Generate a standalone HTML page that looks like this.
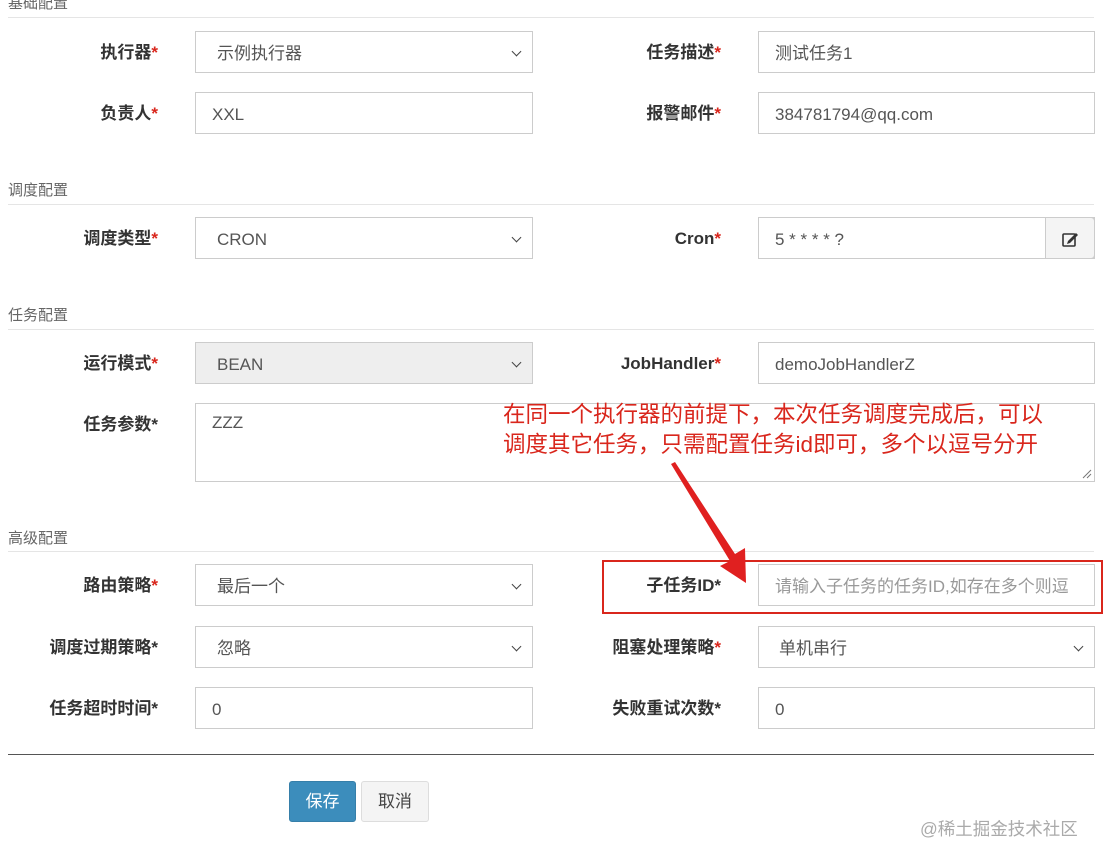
<!DOCTYPE html>
<html><head><meta charset="utf-8"><style>
*{box-sizing:border-box;margin:0;padding:0}
body{width:1103px;height:861px;background:#fff;position:relative;overflow:hidden;font-family:"Liberation Sans","Noto Sans CJK SC",sans-serif;color:#555}
.a{position:absolute}
.sec{position:absolute;left:8px;font-size:15px;color:#666;line-height:18px}
.hr{position:absolute;left:8px;width:1086px;height:1px;background:#e5e5e5}
.lab{position:absolute;font-size:17px;font-weight:bold;color:#333;text-align:right;line-height:20px}
.lab i{font-style:normal;color:#d9261c}
.box{position:absolute;height:42px;border:1px solid #ccc;background:#fff;font-size:17px;color:#555;line-height:43px;padding-left:16px}
.l{left:195px;width:338px}
.r{left:758px;width:337px}
.sel:after{content:"";position:absolute;right:12px;top:16px;width:6px;height:6px;border-right:1.5px solid #444;border-bottom:1.5px solid #444;transform:rotate(45deg)}
.sel{padding-left:21px}
.r.sel{padding-left:20px}
</style></head><body>
<div class="sec" style="top:-5px">基础配置</div><div class="hr" style="top:17px"></div>
<div class="lab" style="right:945px;top:43px">执行器<i>*</i></div>
<div class="box l sel" style="top:31px">示例执行器</div>
<div class="lab" style="right:382px;top:43px">任务描述<i>*</i></div>
<div class="box r" style="top:31px">测试任务1</div>
<div class="lab" style="right:945px;top:104px">负责人<i>*</i></div>
<div class="box l" style="top:92px">XXL</div>
<div class="lab" style="right:382px;top:104px">报警邮件<i>*</i></div>
<div class="box r" style="top:92px">384781794@qq.com</div>

<div class="sec" style="top:182px">调度配置</div><div class="hr" style="top:204px"></div>
<div class="lab" style="right:945px;top:229px">调度类型<i>*</i></div>
<div class="box l sel" style="top:217px">CRON</div>
<div class="lab" style="right:382px;top:229px">Cron<i>*</i></div>
<div class="box r" style="top:217px">5 * * * * ?</div>
<div class="a" style="left:1045px;top:217px;width:50px;height:42px;background:#f4f4f4;border:1px solid #ccc;border-radius:0 4px 4px 0">
<svg width="50" height="42" viewBox="0 0 50 42"><rect x="17" y="16" width="12" height="12" fill="none" stroke="#333" stroke-width="1.6" rx="1"/><path d="M22 23 L30 15 L32 17 L24 25 L21 26 Z" fill="#333"/></svg></div>

<div class="sec" style="top:307px">任务配置</div><div class="hr" style="top:329px"></div>
<div class="lab" style="right:945px;top:354px">运行模式<i>*</i></div>
<div class="box l sel" style="top:342px;background:#eee">BEAN</div>
<div class="lab" style="right:382px;top:354px">JobHandler<i>*</i></div>
<div class="box r" style="top:342px">demoJobHandlerZ</div>
<div class="lab" style="right:945px;top:415px">任务参数*</div>
<div class="box" style="left:195px;top:403px;width:900px;height:79px;line-height:38px">ZZZ
<svg class="a" style="right:2px;bottom:2px" width="10" height="10"><path d="M1 9L9 1M5 9L9 5" stroke="#777" stroke-width="1"/></svg></div>
<div class="a" style="left:503px;top:400px;font-size:22.5px;line-height:30px;color:#d9261c">在同一个执行器的前提下，本次任务调度完成后，可以<br>调度其它任务，只需配置任务id即可，多个以逗号分开</div>

<div class="sec" style="top:530px">高级配置</div><div class="hr" style="top:551px"></div>
<div class="lab" style="right:945px;top:576px">路由策略<i>*</i></div>
<div class="box l sel" style="top:564px">最后一个</div>
<div class="lab" style="right:382px;top:576px">子任务ID*</div>
<div class="box r" style="top:564px;color:#999">请输入子任务的任务ID,如存在多个则逗</div>
<div class="a" style="left:602px;top:560px;width:501px;height:54px;border:2px solid #d9261c"></div>
<div class="lab" style="right:945px;top:638px">调度过期策略*</div>
<div class="box l sel" style="top:626px">忽略</div>
<div class="lab" style="right:382px;top:638px">阻塞处理策略<i>*</i></div>
<div class="box r sel" style="top:626px">单机串行</div>
<div class="lab" style="right:945px;top:699px">任务超时时间*</div>
<div class="box l" style="top:687px">0</div>
<div class="lab" style="right:382px;top:699px">失败重试次数*</div>
<div class="box r" style="top:687px">0</div>

<svg class="a" style="left:0;top:0" width="1103" height="861"><path d="M671 464 L675 462 L735 554 L745 548 L746 583 L720 566 L730 561 Z" fill="#e02020"/></svg>

<div class="a" style="left:8px;top:754px;width:1086px;height:1px;background:#555"></div>
<div class="a" style="left:289px;top:781px;width:67px;height:41px;background:#3c8dbc;border:1px solid #367fa9;border-radius:3px;color:#fff;font-size:17px;line-height:40px;text-align:center">保存</div>
<div class="a" style="left:361px;top:781px;width:68px;height:41px;background:#f4f4f4;border:1px solid #ddd;border-radius:3px;color:#444;font-size:17px;line-height:40px;text-align:center">取消</div>
<div class="a" style="left:920px;top:816px;font-size:17.5px;color:#aaa">@稀土掘金技术社区</div>
</body></html>
